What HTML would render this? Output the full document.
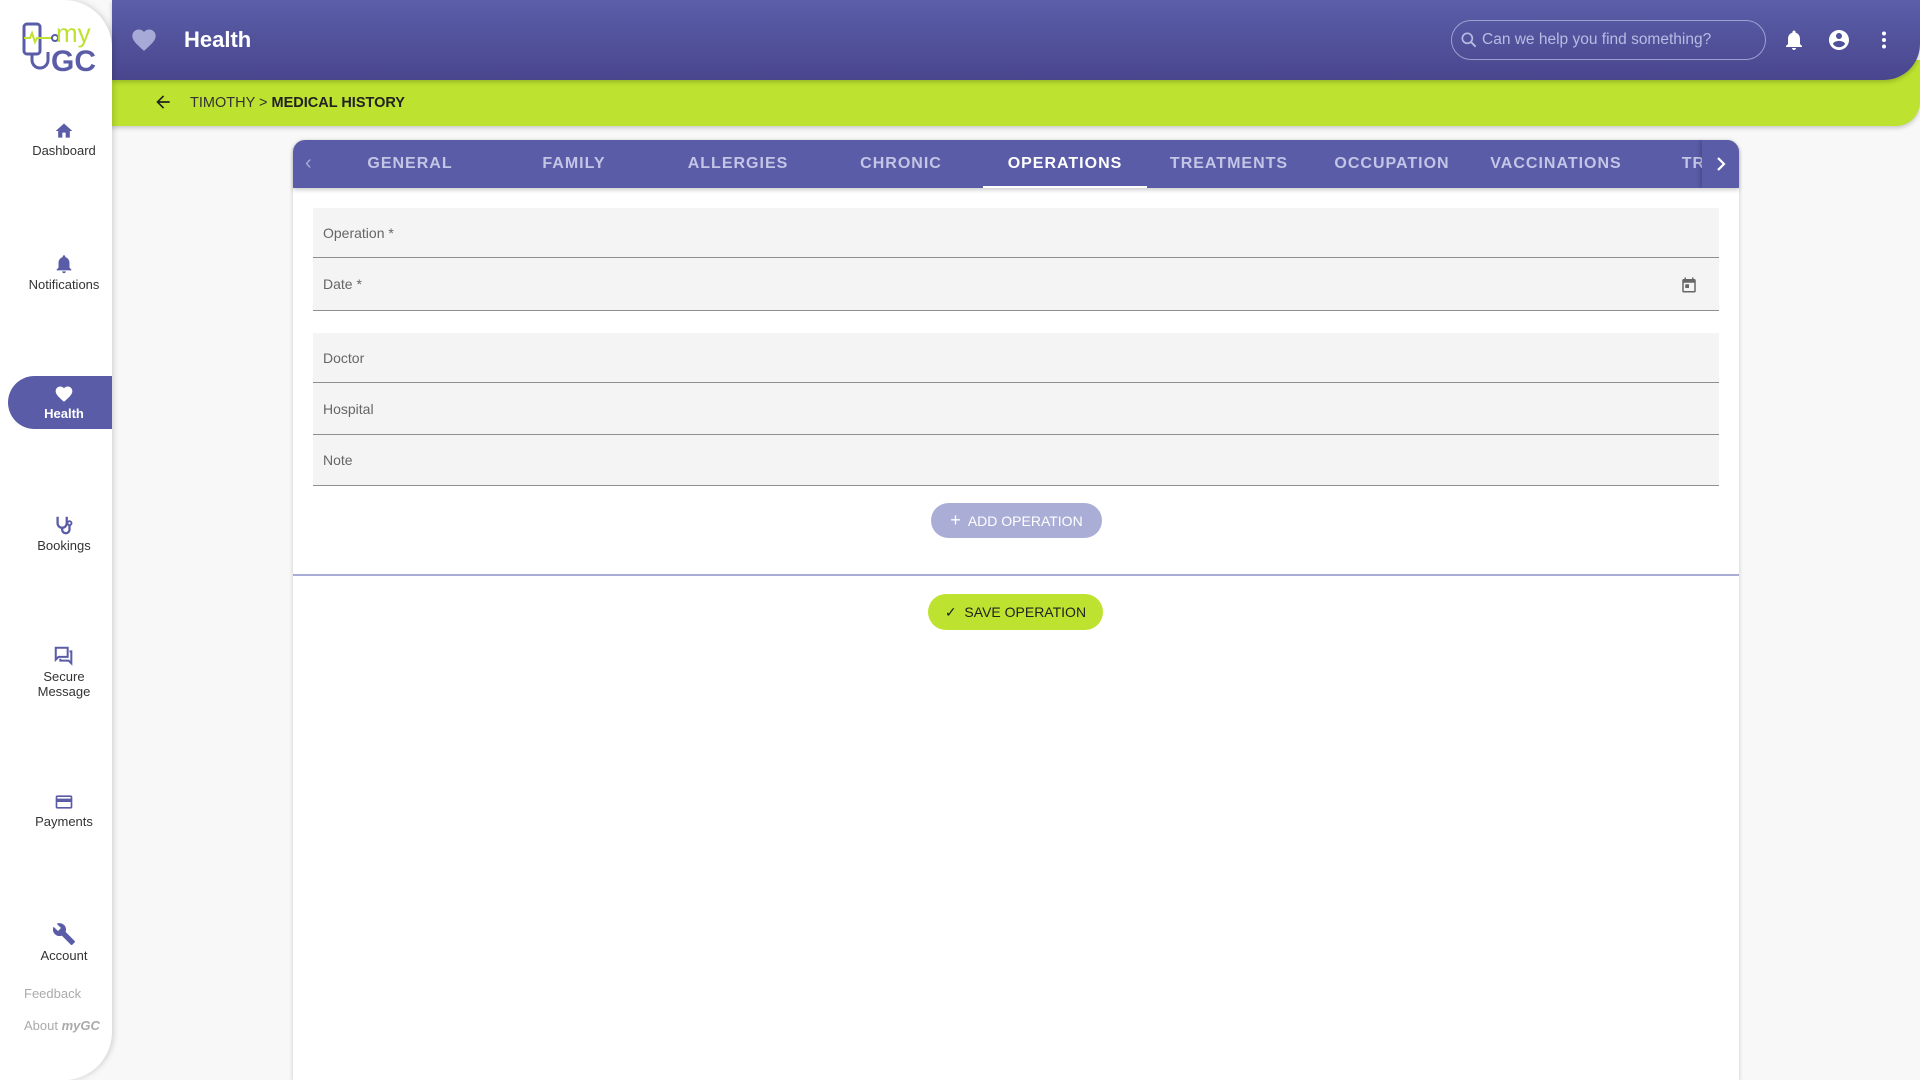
<!DOCTYPE html>
<html><head><meta charset="utf-8"><style>
*{box-sizing:border-box;margin:0;padding:0}
html,body{width:1920px;height:1080px;overflow:hidden}
body{background:#f8f8f8;font-family:"Liberation Sans",sans-serif;position:relative}
.abs{position:absolute}
#side{left:0;top:0;width:112px;height:1080px;background:#fff;border-radius:0 48px 48px 0;box-shadow:2px 0 6px rgba(0,0,0,.15);z-index:5;overflow:hidden}
.nav{position:absolute;left:8px;width:112px;text-align:center;font-size:13px;color:#333;line-height:15px}
.nav svg{display:block;margin:0 auto 2px}
#hdr{left:112px;top:0;width:1808px;height:80px;background:linear-gradient(#5b5ea9,#49468e);border-radius:0 0 36px 0;z-index:3;box-shadow:0 2px 5px rgba(0,0,0,.2)}
#green{left:100px;top:60px;width:1820px;height:66px;background:#bde22f;border-radius:0 0 24px 0;z-index:2;box-shadow:0 2px 5px rgba(0,0,0,.2)}
#card{left:293px;top:140px;width:1446px;height:940px;background:#fff;border-radius:12px 12px 0 0;box-shadow:0 1px 4px rgba(0,0,0,.2)}
#tabs{left:0;top:0;width:1446px;height:48px;background:#5a5ca8;border-radius:12px 12px 0 0;overflow:hidden;box-shadow:0 2px 4px rgba(0,0,0,.2)}
.tab{position:absolute;top:0;height:48px;width:164px;text-align:center;line-height:48px;font-size:16px;font-weight:bold;letter-spacing:1px;color:#c3c5e6}
.fld{position:absolute;left:20px;width:1406px;background:#f4f4f4;border-bottom:1px solid #8f8f8f;font-size:14px;color:#666;padding-left:10px}
.btn{position:absolute;border-radius:18px;font-size:14px;text-align:center}
</style></head><body>
<div id="side" class="abs">
 <svg class="abs" style="left:22px;top:20px" width="78" height="52" viewBox="0 0 78 52">
  <rect x="2" y="4" width="16" height="30" rx="3" fill="none" stroke="#5a5ca8" stroke-width="3"/>
  <path d="M2 18h6l2-5 3 9 2-4h16" fill="none" stroke="#bde22f" stroke-width="2"/>
  <circle cx="33" cy="18" r="3" fill="none" stroke="#5a5ca8" stroke-width="2"/>
  <path d="M10 34v6a8 8 0 0 0 16 0v-8" fill="none" stroke="#5a5ca8" stroke-width="3"/>
  <text x="34" y="22" font-size="26" fill="#bde22f" font-family="Liberation Sans">my</text>
  <text x="29" y="51" font-size="30" font-weight="bold" fill="#5a5ca8" font-family="Liberation Sans">GC</text>
 </svg>
 <div class="nav" style="top:121px"><svg width="22" height="20" viewBox="0 0 24 24"><path d="M10 20v-6h4v6h5v-8h3L12 3 2 12h3v8z" fill="#5a5ca8"/></svg>Dashboard</div>
 <div class="nav" style="top:253px"><svg width="22" height="22" viewBox="0 0 24 24"><path d="M12 22c1.1 0 2-.9 2-2h-4c0 1.1.9 2 2 2zm6-6v-5c0-3.07-1.64-5.64-4.5-6.32V4c0-.83-.67-1.5-1.5-1.5s-1.5.67-1.5 1.5v.68C7.63 5.36 6 7.92 6 11v5l-2 2v1h16v-1l-2-2z" fill="#5a5ca8"/></svg>Notifications</div>
 <div class="abs" style="left:8px;top:376px;width:104px;height:53px;background:#5a5ca8;border-radius:27px 0 0 27px"></div>
 <div class="nav" style="top:384px;color:#fff;font-weight:bold"><svg width="22" height="20" viewBox="0 0 24 24"><path d="M12 21.35l-1.45-1.32C5.4 15.36 2 12.28 2 8.5 2 5.42 4.42 3 7.5 3c1.74 0 3.41.81 4.5 2.09C13.09 3.81 14.76 3 16.5 3 19.58 3 22 5.42 22 8.5c0 3.78-3.4 6.86-8.55 11.54z" fill="#fff"/></svg>Health</div>
 <div class="nav" style="top:514px"><svg width="22" height="22" viewBox="0 0 24 24"><path d="M5 3v7a5 5 0 0 0 10 0V3M10 15v2a4 4 0 0 0 8 0v-4" fill="none" stroke="#5a5ca8" stroke-width="2.5"/><circle cx="18" cy="10" r="2.2" fill="none" stroke="#5a5ca8" stroke-width="2"/></svg>Bookings</div>
 <div class="nav" style="top:645px"><svg width="22" height="22" viewBox="0 0 24 24"><path d="M3 3h13v10H6l-3 3z M8 15v2h9l3 3V7h-2" fill="none" stroke="#5a5ca8" stroke-width="2.2"/></svg>Secure<br>Message</div>
 <div class="nav" style="top:792px"><svg width="22" height="20" viewBox="0 0 24 24"><path d="M20 4H4c-1.1 0-2 .9-2 2v12c0 1.1.9 2 2 2h16c1.1 0 2-.9 2-2V6c0-1.1-.9-2-2-2zm0 14H4v-6h16v6zm0-10H4V6h16v2z" fill="#5a5ca8"/></svg>Payments</div>
 <div class="nav" style="top:922px"><svg width="24" height="24" viewBox="0 0 24 24"><path d="M22.7 19l-9.1-9.1c.9-2.3.4-5-1.5-6.9-2-2-5-2.4-7.4-1.3L9 6 6 9 1.6 4.7C.4 7.1.9 10.1 2.9 12.1c1.9 1.9 4.6 2.4 6.9 1.5l9.1 9.1c.4.4 1 .4 1.4 0l2.3-2.3c.5-.4.5-1.1.1-1.4z" fill="#5a5ca8"/></svg>Account</div>
 <div class="abs" style="left:24px;top:986px;font-size:13px;color:#aaa">Feedback</div>
 <div class="abs" style="left:24px;top:1018px;font-size:13px;color:#aaa">About <i style="font-weight:bold">myGC</i></div>
</div>
<div id="hdr" class="abs">
 <svg class="abs" style="left:17px;top:26px" width="30" height="28" viewBox="0 0 24 24"><path d="M12 21.35l-1.45-1.32C5.4 15.36 2 12.28 2 8.5 2 5.42 4.42 3 7.5 3c1.74 0 3.41.81 4.5 2.09C13.09 3.81 14.76 3 16.5 3 19.58 3 22 5.42 22 8.5c0 3.78-3.4 6.86-8.55 11.54z" fill="#a7aad6"/></svg>
 <div class="abs" style="left:72px;top:27px;font-size:22px;font-weight:bold;color:#fff">Health</div>
 <div class="abs" style="left:1339px;top:20px;width:315px;height:40px;border:1px solid #9da0d0;border-radius:20px"></div>
 <svg class="abs" style="left:1347px;top:30px" width="20" height="20" viewBox="0 0 24 24"><circle cx="10" cy="10" r="6" fill="none" stroke="#b8bbe2" stroke-width="2"/><path d="M14.5 14.5L20 20" stroke="#b8bbe2" stroke-width="2.2"/></svg>
 <div class="abs" style="left:1370px;top:31px;font-size:15.5px;color:#b8bbe2">Can we help you find something?</div>
 <svg class="abs" style="left:1670px;top:28px" width="24" height="24" viewBox="0 0 24 24"><path d="M12 22c1.1 0 2-.9 2-2h-4c0 1.1.9 2 2 2zm6-6v-5c0-3.07-1.64-5.64-4.5-6.32V4c0-.83-.67-1.5-1.5-1.5s-1.5.67-1.5 1.5v.68C7.63 5.36 6 7.92 6 11v5l-2 2v1h16v-1l-2-2z" fill="#fff"/></svg>
 <svg class="abs" style="left:1715px;top:28px" width="24" height="24" viewBox="0 0 24 24"><path d="M12 2C6.48 2 2 6.48 2 12s4.48 10 10 10 10-4.48 10-10S17.520 2 12 2zm0 3c1.66 0 3 1.34 3 3s-1.34 3-3 3-3-1.34-3-3 1.34-3 3-3zm0 14.2c-2.5 0-4.71-1.28-6-3.22.03-1.99 4-3.08 6-3.08 1.99 0 5.970 1.09 6 3.08-1.29 1.94-3.5 3.22-6 3.22z" fill="#fff"/></svg>
 <svg class="abs" style="left:1760px;top:28px" width="24" height="24" viewBox="0 0 24 24"><circle cx="12" cy="5.5" r="2" fill="#fff"/><circle cx="12" cy="12" r="2" fill="#fff"/><circle cx="12" cy="18.5" r="2" fill="#fff"/></svg>
</div>
<div id="green" class="abs">
 <svg class="abs" style="left:52px;top:32px" width="22" height="20" viewBox="0 0 24 24"><path d="M20 11H7.8l5.6-5.6L12 4l-8 8 8 8 1.4-1.4L7.8 13H20z" fill="#222"/></svg>
 <div class="abs" style="left:90px;top:35px;font-size:14.5px;color:#333">TIMOTHY &gt; <b style="color:#222">MEDICAL HISTORY</b></div>
</div>
<div id="card" class="abs">
 <div id="tabs" class="abs">
  <div class="abs" style="left:12px;top:12px;font-size:20px;color:#a7aad6">&#8249;</div>
  <div class="tab" style="left:35px">GENERAL</div>
  <div class="tab" style="left:199px">FAMILY</div>
  <div class="tab" style="left:363px">ALLERGIES</div>
  <div class="tab" style="left:526px">CHRONIC</div>
  <div class="tab" style="left:690px;color:#fff">OPERATIONS</div>
  <div class="tab" style="left:854px">TREATMENTS</div>
  <div class="tab" style="left:1017px">OCCUPATION</div>
  <div class="tab" style="left:1181px">VACCINATIONS</div>
  <div class="tab" style="left:1360px">TREATMENT</div>
  <div class="abs" style="left:690px;top:46px;width:164px;height:2px;background:#fff"></div>
  <div class="abs" style="left:1409px;top:0;width:37px;height:48px;background:#5a5ca8;box-shadow:-2px 0 4px rgba(0,0,0,.2)"></div>
  <svg class="abs" style="left:1421px;top:16px" width="14" height="16" viewBox="0 0 14 16"><path d="M4 2l6 6-6 6" fill="none" stroke="#fff" stroke-width="2.2"/></svg>
 </div>
 <div class="fld" style="top:68px;height:50px;line-height:50px">Operation *</div>
 <div class="fld" style="top:118px;height:53px;line-height:53px">Date *
  <svg class="abs" style="left:1367px;top:18px" width="18" height="18" viewBox="0 0 24 24"><path d="M19 4h-1V2h-2v2H8V2H6v2H5a2 2 0 0 0-2 2v14a2 2 0 0 0 2 2h14a2 2 0 0 0 2-2V6a2 2 0 0 0-2-2zm0 16H5V9h14zM7 11h5v5H7z" fill="#666"/></svg></div>
 <div class="fld" style="top:193px;height:50px;line-height:50px">Doctor</div>
 <div class="fld" style="top:243px;height:52px;line-height:52px">Hospital</div>
 <div class="fld" style="top:295px;height:51px;line-height:51px">Note</div>
 <div class="btn" style="left:638px;top:363px;width:171px;height:35px;line-height:35px;background:#aaaed6;color:#fff"><span style="font-size:18px">+</span>&nbsp; ADD OPERATION</div>
 <div class="abs" style="left:0;top:434px;width:1446px;height:2px;background:#a9acd4"></div>
 <div class="btn" style="left:635px;top:454px;width:175px;height:36px;line-height:36px;background:#bde22f;color:#222">&#10003;&nbsp; SAVE OPERATION</div>
</div>
</body></html>
